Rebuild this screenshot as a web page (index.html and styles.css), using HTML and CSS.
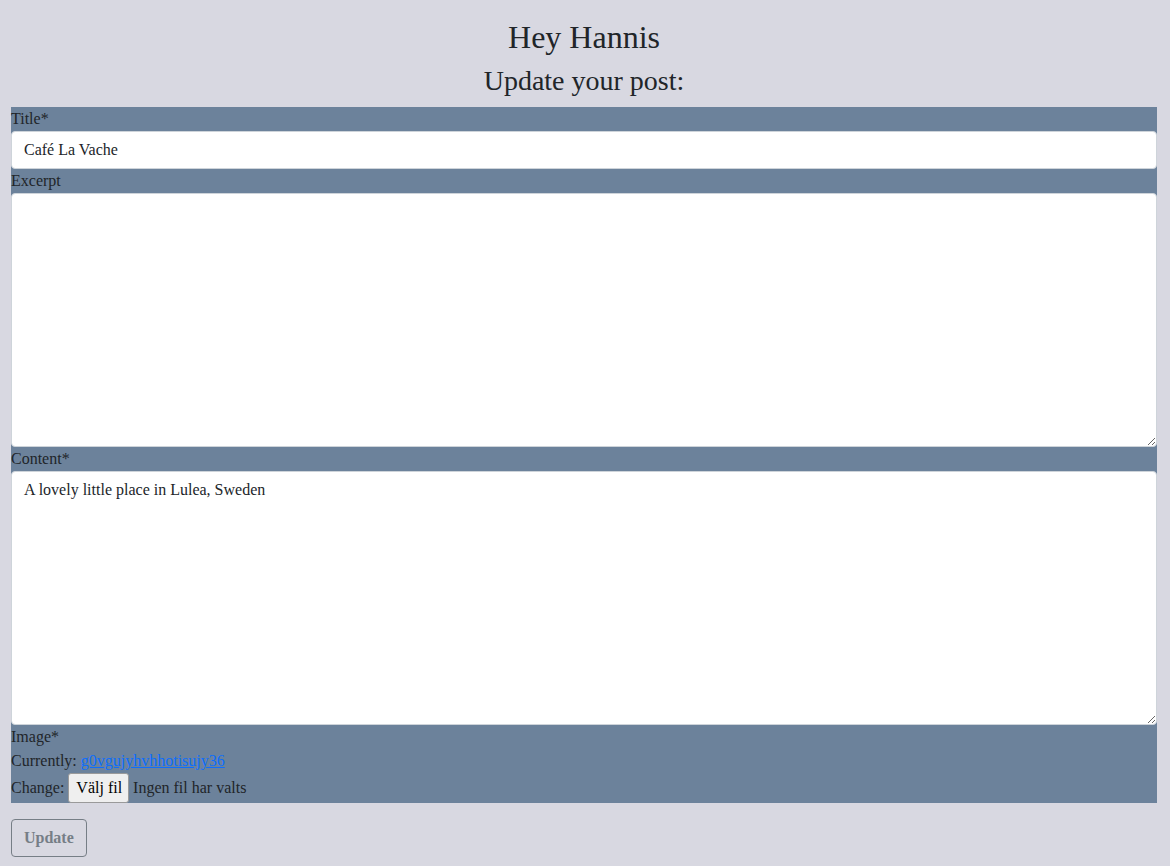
FILE: index.html
```html
<!DOCTYPE html>
<html lang="sv">
<head>
<meta charset="utf-8">
<title>Update post</title>
<link rel="stylesheet" href="styles.css">
</head>
<body>
<main class="page">
  <h2 class="greeting">Hey Hannis</h2>
  <h3 class="subtitle">Update your post:</h3>
  <form class="post-form">
    <label class="field-label" for="title">Title*</label>
    <input class="control" id="title" type="text" value="Café La Vache">
    <label class="field-label" for="excerpt">Excerpt</label>
    <textarea class="control area" id="excerpt" rows="10"></textarea>
    <label class="field-label" for="content">Content*</label>
    <textarea class="control area" id="content" rows="10">A lovely little place in Lulea, Sweden</textarea>
    <div class="field-label">Image*</div>
    <div class="line">Currently: <a href="#" class="file-link">g0vgujyhvhhotisujy36</a></div>
    <div class="line change">Change: <span class="file-btn">Välj fil</span><span class="file-none">Ingen fil har valts</span></div>
  </form>
  <button class="update-btn" type="button">Update</button>
</main>
</body>
</html>
```
FILE: styles.css
```css
* { box-sizing: border-box; }
html, body { margin: 0; padding: 0; }
body {
  background: #d8d8e1;
  color: #212529;
  font-family: "Liberation Serif", "Times New Roman", serif;
  font-size: 16px;
  line-height: 1.5;
}
.page {
  padding: 18px 13px 0 11px;
}
.greeting {
  margin: 0 0 8px;
  font-size: 32px;
  font-weight: 400;
  line-height: 1.2;
  text-align: center;
}
.subtitle {
  margin: 0 0 9px;
  font-size: 28px;
  font-weight: 400;
  line-height: 1.2;
  text-align: center;
}
.post-form {
  display: flex;
  flex-direction: column;
  background: #6c829b;
}
.field-label {
  display: block;
  height: 24px;
}
.control {
  display: block;
  width: 100%;
  margin: 0;
  padding: 6px 12px;
  font: inherit;
  line-height: 1.5;
  color: #212529;
  background: #fff;
  border: 1px solid #ced4da;
  border-radius: 4px;
}
input.control { height: 38px; }
.area {
  height: 254px;
  resize: vertical;
}
.line { height: 24px; }
.file-link { color: #0d6efd; text-decoration: underline; }
.change {
  height: 30px;
  display: flex;
  align-items: center;
}
.file-btn {
  display: inline-block;
  margin-left: 4px;
  height: 30px;
  padding: 2px 6px 2px 7px;
  line-height: 24px;
  color: #000;
  background: #efefef;
  border: 1px solid #9a9a9a;
  border-radius: 3px;
}
.file-none { margin-left: 4px; }
.update-btn {
  margin-top: 16px;
  height: 38px;
  padding: 6px 12px;
  font: inherit;
  font-weight: 700;
  color: #6c757d;
  background: transparent;
  border: 1px solid #6c757d;
  border-radius: 4px;
  opacity: 0.9;
}
```
